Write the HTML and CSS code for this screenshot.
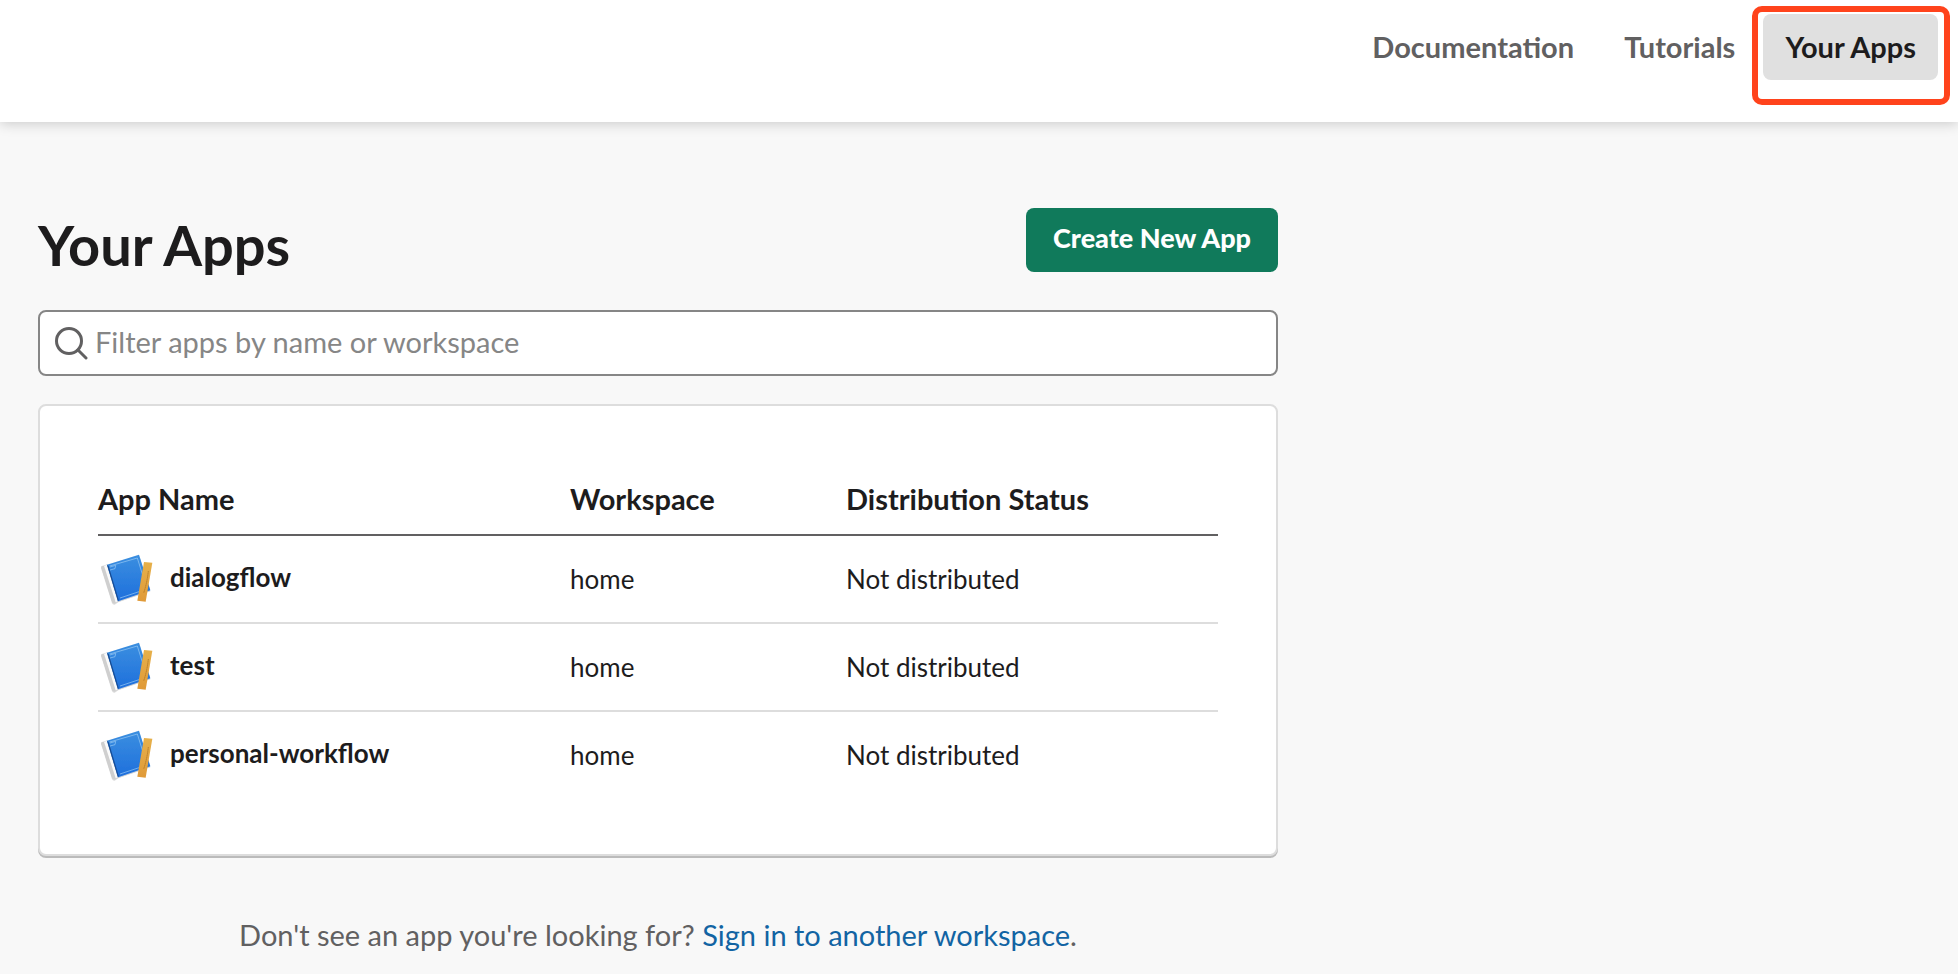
FILE: index.html
```html
<!DOCTYPE html>
<html lang="en">
<head>
<meta charset="utf-8">
<meta name="viewport" content="width=device-width, initial-scale=1">
<title>Your Apps</title>
<link rel="stylesheet" href="styles.css">
</head>
<body>
<svg class="sprite" aria-hidden="true">
  <defs>
    <linearGradient id="cover" x1="0" y1="0" x2="0" y2="1"><stop offset="0" stop-color="#3b8fe0"/><stop offset="1" stop-color="#1e6fdc"/></linearGradient>
    <linearGradient id="wood" x1="0" y1="0" x2="0" y2="1"><stop offset="0" stop-color="#e6b04a"/><stop offset="1" stop-color="#e09a38"/></linearGradient>
    <filter id="soft" x="-20%" y="-20%" width="140%" height="140%"><feDropShadow dx="0" dy="2" stdDeviation="2" flood-color="#000" flood-opacity="0.3"/></filter>
  </defs>
  <symbol id="app-icon" viewBox="24 33 168 168">
    <path d="M33 81 Q34 77 40 77 L52 73 L84 184 L76 190 Q69 192 66 186 Z" fill="#cfcfcf" filter="url(#soft)"/>
    <path d="M42 77 L52 74 L84 184 L77 187 Z" fill="#fafafa"/>
    <path d="M51 74 L147 44 L181 151 L84 184 Z" fill="url(#cover)" filter="url(#soft)"/>
    <path d="M51 74 L56 78 L86 179 L84 184 Z" fill="#164a92"/>
    <path d="M59 78 L142 54 L171 147 L90 174 M60 90 L75 86 L77 76 L60 81" fill="none" stroke="#9cccf5" stroke-width="2"/>
    <path d="M162 66 L187 68 L167 185 L142 182 Z" fill="url(#wood)"/>
    <path d="M175 93 Q171 130 161 159" fill="none" stroke="#a56a1c" stroke-width="2" stroke-dasharray="5 1"/>
  </symbol>
</svg>

<header class="header">
  <nav class="nav">
    <a class="nav-link" href="#docs">Documentation</a>
    <a class="nav-link" href="#tutorials">Tutorials</a>
    <a class="nav-link nav-link-active" href="#apps">Your Apps</a>
  </nav>
</header>

<main class="content">
  <div class="title-row">
    <h1 class="title">Your Apps</h1>
    <button class="create" type="button">Create New App</button>
  </div>
  <label class="search">
    <svg class="search-icon" viewBox="0 0 34 34" fill="none" stroke="#616061" stroke-width="3" stroke-linecap="round" aria-hidden="true"><circle cx="14" cy="15" r="12.5"/><path d="M23 24 L31 32"/></svg>
    <input class="search-input" type="text" aria-label="Filter apps" placeholder="Filter apps by name or workspace">
  </label>
  <section class="card">
    <table class="apps">
      <thead>
        <tr><th class="col-name">App Name</th><th class="col-space">Workspace</th><th>Distribution Status</th></tr>
      </thead>
      <tbody>
        <tr>
          <td><a class="app" href="#dialogflow"><svg class="app-icon" aria-hidden="true"><use href="#app-icon"/></svg><span class="app-name">dialogflow</span></a></td>
          <td>home</td><td>Not distributed</td>
        </tr>
        <tr>
          <td><a class="app" href="#test"><svg class="app-icon" aria-hidden="true"><use href="#app-icon"/></svg><span class="app-name">test</span></a></td>
          <td>home</td><td>Not distributed</td>
        </tr>
        <tr>
          <td><a class="app" href="#personal-workflow"><svg class="app-icon" aria-hidden="true"><use href="#app-icon"/></svg><span class="app-name">personal-workflow</span></a></td>
          <td>home</td><td>Not distributed</td>
        </tr>
      </tbody>
    </table>
  </section>
  <p class="hint">Don't see an app you're looking for? <a class="hint-link" href="#signin">Sign in to another workspace</a>.</p>
</main>
</body>
</html>
```

FILE: styles.css
```css
* {
  box-sizing: border-box;
}

body {
  margin: 0;
  background: #f8f8f8;
  color: #1d1c1d;
  font-family: Lato, "Liberation Sans", sans-serif;
  font-size: 29px;
  line-height: 40px;
}

a {
  color: inherit;
  text-decoration: none;
}

.sprite {
  position: absolute;
  width: 0;
  height: 0;
}

.header {
  background: #fff;
  box-shadow: 0 2px 12px rgba(0, 0, 0, 0.18);
  padding: 14px 20px 42px;
}

.nav {
  display: flex;
  justify-content: flex-end;
  gap: 6px;
}

.nav-link {
  position: relative;
  padding: 13px 22px;
  border-radius: 8px;
  color: #616061;
  font-weight: 700;
}

.nav-link-active {
  background: #e0e0e0;
  color: #1d1c1d;
}

/* highlight frame drawn over the header */
.nav-link-active::after {
  content: "";
  position: absolute;
  inset: -8px -12px -25px -11px;
  border: 6px solid #ff431c;
  border-radius: 10px;
}

.content {
  max-width: 1316px;
  padding: 86px 38px 16px;
}

.title-row {
  display: flex;
  justify-content: space-between;
  align-items: flex-start;
  margin-bottom: 28px;
}

.title {
  margin: 0;
  font-size: 56px;
  line-height: 74px;
  font-weight: 700;
}

.create {
  border: 0;
  border-radius: 8px;
  padding: 10px 27px 14px;
  background: #107a5b;
  color: #fff;
  font: inherit;
  font-size: 27px;
  font-weight: 900;
}

.search {
  display: flex;
  align-items: center;
  height: 66px;
  padding: 0 15px;
  gap: 6px;
  border: 2px solid #868686;
  border-radius: 8px;
  background: #fff;
}

.search-icon {
  flex: none;
  width: 34px;
  height: 34px;
}

.search-input {
  flex: 1;
  min-width: 0;
  border: 0;
  padding: 0 0 2px;
  outline: 0;
  background: none;
  color: inherit;
  font: inherit;
}

.search-input::placeholder {
  color: #868686;
  opacity: 1;
}

.card {
  margin-top: 28px;
  padding: 73px 58px 54px;
  border: 2px solid #ddd;
  border-radius: 8px;
  background: #fff;
  box-shadow: 0 2px 0 #bbb;
}

.apps {
  width: 100%;
  border-collapse: separate;
  border-spacing: 0;
  table-layout: fixed;
  text-align: left;
}

.apps th {
  padding: 0 0 15px;
  border-bottom: 2px solid #616061;
  font-weight: 700;
}

.col-name {
  width: 472px;
}

.col-space {
  width: 276px;
}

.apps td {
  height: 88px;
  padding: 0;
  border-bottom: 2px solid #ddd;
  font-size: 26px;
  vertical-align: middle;
}

.apps tbody tr:last-child td {
  border-bottom-color: transparent;
}

.app {
  display: flex;
  align-items: center;
  gap: 16px;
}

.app-icon {
  flex: none;
  width: 56px;
  height: 56px;
}

.app-name {
  padding-bottom: 4px;
  font-weight: 700;
}

.hint {
  margin: 59px 0 0;
  color: #616061;
  text-align: center;
}

.hint-link {
  color: #1264a3;
}
```
